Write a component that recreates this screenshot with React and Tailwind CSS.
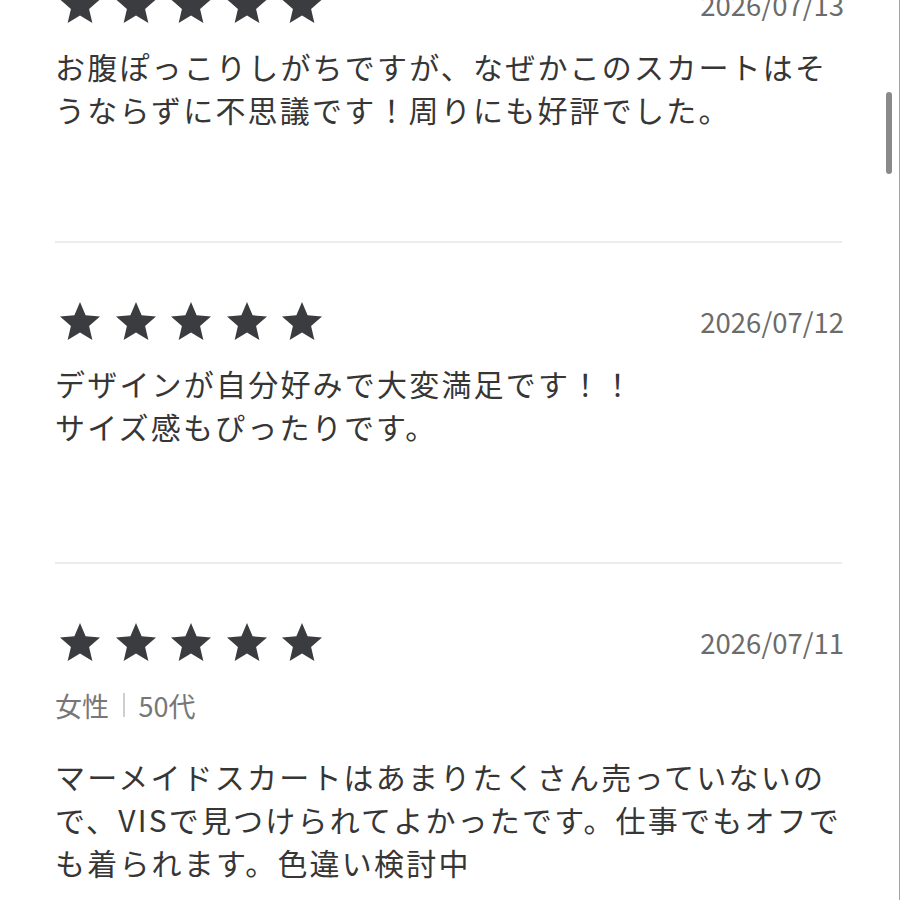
import React from "react";

const Star = () => (
  <svg viewBox="0 0 24 24" className="w-[48px] h-[48px] shrink-0" fill="#3b3c40">
    <path d="M12 17.27L18.18 21l-1.64-7.03L22 9.24l-7.19-.61L12 2 9.19 8.63 2 9.24l5.46 4.73L5.82 21z" />
  </svg>
);

const Stars = () => (
  <div className="flex items-center gap-[7.5px] ml-[1px]">
    <Star />
    <Star />
    <Star />
    <Star />
    <Star />
  </div>
);

const Review = ({ date, meta, lines, first }) => (
  <div className={first ? "pt-0" : "pt-[55px]"}>
    <div className="flex items-center justify-between h-[48px]">
      <Stars />
      <span className="text-[27.5px] text-[#6b6b6b] leading-none">{date}</span>
    </div>
    {meta && (
      <div className="mt-[18px] h-[40px] flex items-center text-[27px] text-[#777] leading-none">
        <span>女性</span>
        <span className="mx-[14px] w-[1.5px] h-[24px] bg-[#cfcfcf]" />
        <span>50代</span>
      </div>
    )}
    <div
      className={
        (meta ? "mt-[30px] " : "mt-[16px] ") +
        "text-[30px] leading-[43px] tracking-[2.2px] text-[#363636] whitespace-nowrap"
      }
    >
      {lines.map((l, i) => (
        <div key={i}>{l}</div>
      ))}
    </div>
  </div>
);

export default function App() {
  return (
    <div
      className="relative w-[900px] h-[900px] overflow-hidden bg-white border-r border-[#a3a3a3]"
      style={{ fontFamily: '"Noto Sans CJK JP", "Noto Sans", sans-serif' }}
    >
      <div className="px-[55px] -mt-[19px]">
        <Review
          first
          date="2026/07/13"
          lines={[
            "お腹ぽっこりしがちですが、なぜかこのスカートはそ",
            "うならずに不思議です！周りにも好評でした。",
          ]}
        />
        <div className="mt-[110px] h-[2px] bg-[#ececec] mr-[2px]" />
        <Review
          date="2026/07/12"
          lines={["デザインが自分好みで大変満足です！！", "サイズ感もぴったりです。"]}
        />
        <div className="mt-[114px] h-[2px] bg-[#ececec] mr-[2px]" />
        <Review
          date="2026/07/11"
          meta
          lines={[
            "マーメイドスカートはあまりたくさん売っていないの",
            "で、VISで見つけられてよかったです。仕事でもオフで",
            "も着られます。色違い検討中",
          ]}
        />
      </div>
      <div className="absolute right-[7px] top-[92px] w-[6px] h-[82px] rounded-full bg-[#8a8a8a]" />
    </div>
  );
}
